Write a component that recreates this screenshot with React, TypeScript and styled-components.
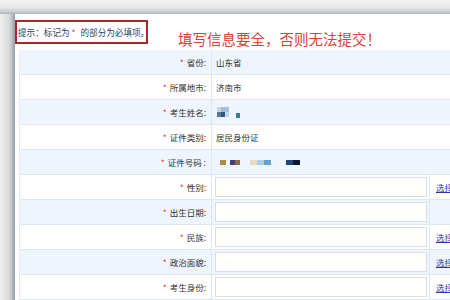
import styled, { createGlobalStyle } from "styled-components";

const GlobalStyle = createGlobalStyle`
  html, body {
    margin: 0;
    padding: 0;
    background: #fff;
    overflow: hidden;
  }
  body {
    font-family: "Noto Sans CJK SC", "Noto Sans", sans-serif;
  }
`;

type Field = {
  label: string;
  kind: "text" | "id" | "name" | "input";
  value?: string;
  pick?: boolean;
};

const fields: Field[] = [
  { label: "省份:", kind: "text", value: "山东省" },
  { label: "所属地市:", kind: "text", value: "济南市" },
  { label: "考生姓名:", kind: "name" },
  { label: "证件类别:", kind: "text", value: "居民身份证" },
  { label: "证件号码 :", kind: "id" },
  { label: "性别:", kind: "input", pick: true },
  { label: "出生日期:", kind: "input" },
  { label: "民族:", kind: "input", pick: true },
  { label: "政治面貌:", kind: "input", pick: true },
  { label: "考生身份:", kind: "input", pick: true },
];

const nameCells = ["#c8d4de", "#a8bccc", "#9cc4e0", "#5a7890", "#2a5a88", "#c0d8ea"];

const idBlocks = [
  { w: 6, c: "#a89040", gap: 4 },
  { w: 5, c: "#4a3d7a", gap: 4 },
  { w: 5, c: "#8a7048", gap: 0 },
  { w: 7, c: "#e6dcb8", gap: 10 },
  { w: 7, c: "#a8d0e8", gap: 0 },
  { w: 7, c: "#6aa0c8", gap: 0 },
  { w: 7, c: "#1e4a7a", gap: 15 },
  { w: 7, c: "#0c1434", gap: 0 },
];

const App = () => {
  return (
    <>
      <GlobalStyle />
      <Page>
        <TopShade />
        <Main>
          <LeftShade />
          <Panel>
            <Header>
              <TipBox>
                提示：标记为 <Star>*</Star> 的部分为必填项。
              </TipBox>
              <Warning>填写信息要全，否则无法提交！</Warning>
            </Header>
            <Table>
              {fields.map((f, i) => (
                <Row key={f.label} $alt={i % 2 === 0}>
                  <Label>
                    <Star>*</Star>
                    {f.label}
                  </Label>
                  {f.kind === "text" && <Value>{f.value}</Value>}
                  {f.kind === "name" && (
                    <Value>
                      <NameMosaic>
                        {nameCells.map((c, k) => (
                          <Cell key={k} $c={c} />
                        ))}
                      </NameMosaic>
                      <Pix $w={4} $c="#3a7ab0" $gap={7} $dy={3} />
                    </Value>
                  )}
                  {f.kind === "id" && (
                    <Value>
                      {idBlocks.map((b, k) => (
                        <Pix key={k} $w={b.w} $c={b.c} $gap={b.gap} $dy={0} />
                      ))}
                    </Value>
                  )}
                  {f.kind === "input" && (
                    <>
                      <InputCell>
                        <TextInput />
                      </InputCell>
                      <PickCell>{f.pick && <PickLink href="#">选择</PickLink>}</PickCell>
                    </>
                  )}
                </Row>
              ))}
            </Table>
          </Panel>
        </Main>
      </Page>
    </>
  );
};

export default App;

const Page = styled.div`
  width: 450px;
  height: 300px;
  display: flex;
  flex-direction: column;
  overflow: hidden;
`;

const TopShade = styled.div`
  height: 14px;
  flex: none;
  background: linear-gradient(to bottom, #f4f4f4 0%, #e6e6e6 55%, #c6ccd0 85%, #a9b3b8 100%);
`;

const Main = styled.div`
  flex: 1;
  display: flex;
  min-height: 0;
`;

const LeftShade = styled.div`
  width: 15px;
  flex: none;
  background: linear-gradient(to right, #f0f0f0 0%, #dadada 60%, #b9c0c4 80%, #8e9ba3 100%);
`;

const Panel = styled.div`
  flex: 1;
  background: #fff;
  display: flex;
  flex-direction: column;
`;

const Header = styled.div`
  height: 36px;
  display: flex;
  align-items: flex-start;
`;

const TipBox = styled.div`
  margin-top: 6px;
  width: 133px;
  height: 24px;
  box-sizing: border-box;
  border: 2px solid #a8292b;
  display: flex;
  align-items: center;
  padding-left: 1px;
  font-size: 8.6px;
  color: #2c3e66;
  white-space: pre;
`;

const Star = styled.span`
  color: #e04848;
  margin-right: 3px;
`;

const Warning = styled.div`
  margin: 16px 0 0 30px;
  font-size: 14.5px;
  line-height: 17px;
  color: #d6433a;
  white-space: nowrap;
`;

const Table = styled.div`
  margin-left: 4px;
  border-left: 1px solid #e2eaf2;
  display: flex;
  flex-direction: column;
`;

const Row = styled.div<{ $alt: boolean }>`
  height: 25px;
  box-sizing: border-box;
  display: grid;
  grid-template-columns: 192px 218px 60px;
  border-bottom: 1px solid #dde7f0;
  background: ${(p) => (p.$alt ? "#eef5fc" : "#fff")};
  font-size: 8.5px;
  color: #333;
`;

const Label = styled.div`
  display: flex;
  align-items: center;
  justify-content: flex-end;
  padding-right: 5px;
  border-right: 1px solid #dde7f0;
  white-space: pre;
`;

const Value = styled.div`
  grid-column: 2 / 4;
  display: flex;
  align-items: center;
  padding-left: 4px;
`;

const NameMosaic = styled.div`
  display: grid;
  grid-template-columns: repeat(3, 4px);
  grid-template-rows: repeat(2, 5px);
  margin-left: 1px;
`;

const Cell = styled.span<{ $c: string }>`
  background: ${(p) => p.$c};
`;

const Pix = styled.span<{ $w: number; $c: string; $gap: number; $dy: number }>`
  display: inline-block;
  width: ${(p) => p.$w}px;
  height: 5px;
  margin-left: ${(p) => p.$gap}px;
  margin-top: ${(p) => p.$dy * 2}px;
  background: ${(p) => p.$c};
`;

const InputCell = styled.div`
  display: flex;
  align-items: flex-start;
  padding: 2px 0 0 3px;
  border-right: 1px solid #dde7f0;
`;

const TextInput = styled.input`
  width: 212px;
  height: 20px;
  box-sizing: border-box;
  margin: 0;
  border: 1px solid #d6dde4;
  background: #fffffd;
  outline: none;
`;

const PickCell = styled.div`
  display: flex;
  align-items: center;
  padding-left: 6px;
`;

const PickLink = styled.a`
  color: #3434a6;
  text-decoration: underline;
  white-space: nowrap;
`;
